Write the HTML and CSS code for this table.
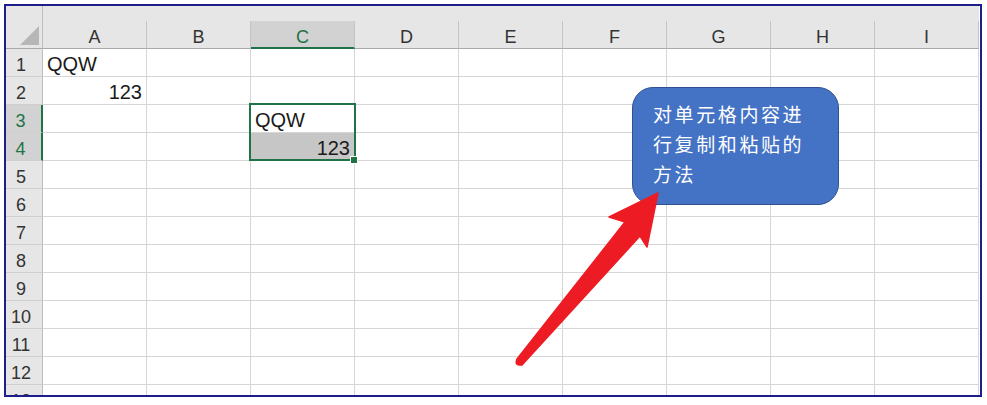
FILE: index.html
```html
<!DOCTYPE html>
<html lang="zh-CN">
<head>
<meta charset="utf-8">
<title>Sheet</title>
<link rel="stylesheet" href="styles.css">
</head>
<body>
<div class="frame">
  <div class="sheet">
    <div class="corner"><svg width="37" height="43" viewBox="0 0 37 43"><polygon points="14,39 33,39 33,20" fill="#b7b7b7"/></svg></div>
    <div class="colhead"><span>A</span></div>
    <div class="colhead"><span>B</span></div>
    <div class="colhead active"><span>C</span></div>
    <div class="colhead"><span>D</span></div>
    <div class="colhead"><span>E</span></div>
    <div class="colhead"><span>F</span></div>
    <div class="colhead"><span>G</span></div>
    <div class="colhead"><span>H</span></div>
    <div class="colhead"><span>I</span></div>

    <div class="rowhead">1</div><div class="cell">QQW</div><div class="cell"></div><div class="cell"></div><div class="cell"></div><div class="cell"></div><div class="cell"></div><div class="cell"></div><div class="cell"></div><div class="cell"></div>
    <div class="rowhead">2</div><div class="cell num">123</div><div class="cell"></div><div class="cell"></div><div class="cell"></div><div class="cell"></div><div class="cell"></div><div class="cell"></div><div class="cell"></div><div class="cell"></div>
    <div class="rowhead active">3</div><div class="cell"></div><div class="cell"></div><div class="cell">QQW</div><div class="cell"></div><div class="cell"></div><div class="cell"></div><div class="cell"></div><div class="cell"></div><div class="cell"></div>
    <div class="rowhead active">4</div><div class="cell"></div><div class="cell"></div><div class="cell num shaded">123</div><div class="cell"></div><div class="cell"></div><div class="cell"></div><div class="cell"></div><div class="cell"></div><div class="cell"></div>
    <div class="rowhead">5</div><div class="cell"></div><div class="cell"></div><div class="cell"></div><div class="cell"></div><div class="cell"></div><div class="cell"></div><div class="cell"></div><div class="cell"></div><div class="cell"></div>
    <div class="rowhead">6</div><div class="cell"></div><div class="cell"></div><div class="cell"></div><div class="cell"></div><div class="cell"></div><div class="cell"></div><div class="cell"></div><div class="cell"></div><div class="cell"></div>
    <div class="rowhead">7</div><div class="cell"></div><div class="cell"></div><div class="cell"></div><div class="cell"></div><div class="cell"></div><div class="cell"></div><div class="cell"></div><div class="cell"></div><div class="cell"></div>
    <div class="rowhead">8</div><div class="cell"></div><div class="cell"></div><div class="cell"></div><div class="cell"></div><div class="cell"></div><div class="cell"></div><div class="cell"></div><div class="cell"></div><div class="cell"></div>
    <div class="rowhead">9</div><div class="cell"></div><div class="cell"></div><div class="cell"></div><div class="cell"></div><div class="cell"></div><div class="cell"></div><div class="cell"></div><div class="cell"></div><div class="cell"></div>
    <div class="rowhead">10</div><div class="cell"></div><div class="cell"></div><div class="cell"></div><div class="cell"></div><div class="cell"></div><div class="cell"></div><div class="cell"></div><div class="cell"></div><div class="cell"></div>
    <div class="rowhead">11</div><div class="cell"></div><div class="cell"></div><div class="cell"></div><div class="cell"></div><div class="cell"></div><div class="cell"></div><div class="cell"></div><div class="cell"></div><div class="cell"></div>
    <div class="rowhead">12</div><div class="cell"></div><div class="cell"></div><div class="cell"></div><div class="cell"></div><div class="cell"></div><div class="cell"></div><div class="cell"></div><div class="cell"></div><div class="cell"></div>
    <div class="rowhead">13</div><div class="cell"></div><div class="cell"></div><div class="cell"></div><div class="cell"></div><div class="cell"></div><div class="cell"></div><div class="cell"></div><div class="cell"></div><div class="cell"></div>

    <div class="selection"></div>
    <div class="fill-handle"></div>
  </div>
</div>

<div class="callout"><p class="callout-text">对单元格内容进行复制和粘贴的方法</p></div>

<svg class="arrow" width="987" height="405" viewBox="0 0 987 405">
  <path d="M658,193 L609,217 L625,222 L517,359 Q514,366 522,365 L640,236 L647,247 Z" fill="#ed1c24" stroke="#ed1c24" stroke-width="1.5" stroke-linejoin="round"/>
</svg>
</body>
</html>
```

FILE: styles.css
```css
* { box-sizing: border-box; }

html, body {
  margin: 0;
  padding: 0;
  background: #ffffff;
}

body {
  position: relative;
  width: 987px;
  height: 405px;
  overflow: hidden;
  font-family: "Liberation Sans", Arial, "Noto Sans CJK SC", sans-serif;
}

.frame {
  margin: 4px 0 0 4px;
  width: 978px;
  height: 393px;
  border: 2px solid #1d1d8c;
  overflow: hidden;
  background: #ffffff;
}

.sheet {
  position: relative;
  display: grid;
  grid-template-columns: 37px repeat(9, 104px);
  grid-template-rows: 43px repeat(13, 28px);
}

.corner {
  background: #e6e6e6;
  border-right: 1px solid #bdbdbd;
  border-bottom: 1px solid #a9a9a9;
}
.corner svg { display: block; }

.colhead {
  background: #e6e6e6;
  display: flex;
  align-items: flex-end;
}
.colhead span {
  display: block;
  width: 100%;
  height: 28px;
  padding-top: 6px;
  line-height: 21px;
  font-size: 18px;
  color: #333333;
  text-align: center;
  border-right: 1px solid #c4c4c4;
  border-bottom: 1px solid #a9a9a9;
}
.colhead.active span {
  background: #d2d2d2;
  color: #217346;
  border-bottom: 2px solid #217346;
}

.rowhead {
  background: #e6e6e6;
  border-right: 1px solid #bdbdbd;
  border-bottom: 1px solid #cfcfcf;
  font-size: 18px;
  line-height: 24px;
  padding-top: 4px;
  padding-right: 6px;
  color: #333333;
  text-align: center;
  white-space: nowrap;
}
.rowhead.active {
  background: #d2d2d2;
  color: #217346;
  border-right: 2px solid #217346;
}

.cell {
  border-right: 1px solid #d6d6d6;
  border-bottom: 1px solid #d6d6d6;
  font-size: 20px;
  line-height: 24px;
  padding: 3px 4px 0 4px;
  color: #1a1a1a;
  white-space: nowrap;
  overflow: hidden;
}
.cell.num { text-align: right; }
.cell.shaded { background: #c6c6c6; }

.selection {
  position: absolute;
  left: 243px;
  top: 97px;
  width: 107px;
  height: 58px;
  border: 2px solid #217346;
}

.fill-handle {
  position: absolute;
  left: 344px;
  top: 150px;
  width: 8px;
  height: 8px;
  background: #217346;
  border: 1px solid #ffffff;
}

.callout {
  position: absolute;
  left: 632px;
  top: 87px;
  width: 207px;
  height: 118px;
  background: #4472c4;
  border: 1.5px solid #2f528f;
  border-radius: 21px;
  padding: 11px 0 0 20px;
}
.callout-text {
  margin: 0;
  width: 160px;
  font-family: "Noto Sans CJK SC", sans-serif;
  font-size: 19px;
  line-height: 30px;
  letter-spacing: 2.6px;
  color: #ffffff;
}

.arrow {
  position: absolute;
  left: 0;
  top: 0;
  pointer-events: none;
}
```
